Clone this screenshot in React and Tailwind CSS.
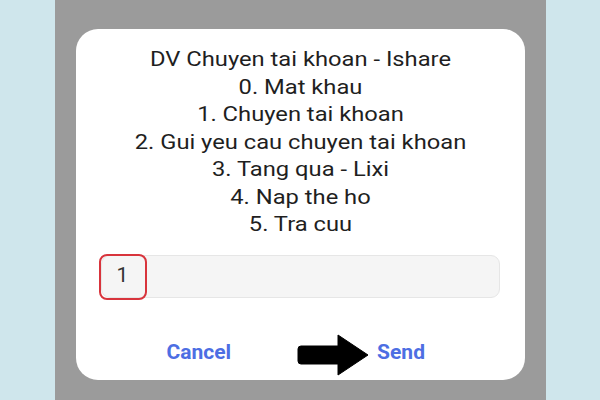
export default function App() {
  return (
    <div className="w-[600px] h-[400px] bg-[#cfe6ec] flex justify-center overflow-hidden" style={{ fontFamily: "Roboto, 'Noto Sans', sans-serif" }}>
      <div className="w-[491px] h-[400px] bg-[#9b9b9b] pl-[21px] pr-[21px] pt-[29px]">
        <div className="w-[449px] h-[351px] bg-white rounded-[22px] pt-[17px] flex flex-col">
          <div className="text-center text-[21px] leading-[27.5px] text-[#1f1f1f] scale-x-[1.13]">
            <div>DV Chuyen tai khoan - Ishare</div>
            <div>0. Mat khau</div>
            <div>1. Chuyen tai khoan</div>
            <div>2. Gui yeu cau chuyen tai khoan</div>
            <div>3. Tang qua - Lixi</div>
            <div>4. Nap the ho</div>
            <div>5. Tra cuu</div>
          </div>
          <div className="mt-[16px] px-[25px]">
            <div className="relative h-[43px] bg-[#f5f5f5] border border-[#e6e6e6] rounded-[9px] flex items-center pl-[15px] text-[21px] text-[#333]">
              1
              <div className="absolute left-[-3px] top-[-2px] w-[48px] h-[46px] border-2 border-[#d8343c] rounded-[8px]"></div>
            </div>
          </div>
          <div className="flex items-center mt-[32px] pl-[91px]">
            <span className="text-[21px] font-bold text-[#4d6ee3]">Cancel</span>
            <svg className="ml-[66px] mt-[4px]" width="72" height="42" viewBox="0 0 72 42">
              <path d="M4 12 H41 V1 L71 21 L41 41 V30 H4 Q1 30 1 27 V15 Q1 12 4 12 Z" fill="#000" stroke="#000" strokeWidth="1" strokeLinejoin="round" />
            </svg>
            <span className="ml-[8px] text-[21px] font-bold text-[#4d6ee3]">Send</span>
          </div>
        </div>
      </div>
    </div>
  );
}
